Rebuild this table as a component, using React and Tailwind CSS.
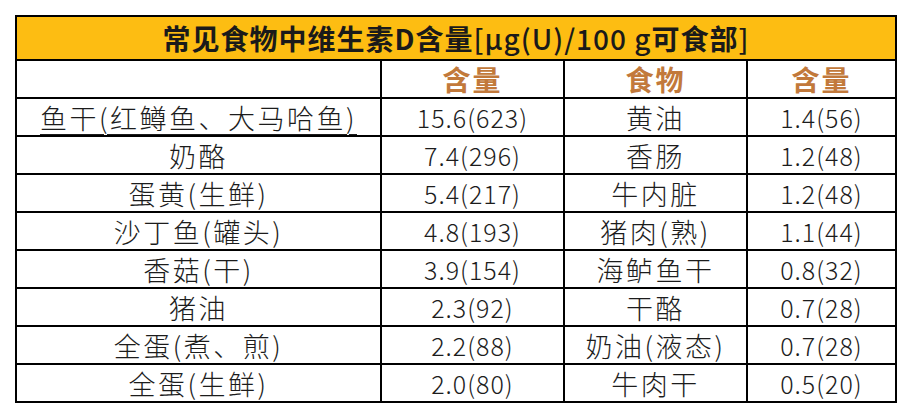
const rows = [
  ["鱼干(红鳟鱼、大马哈鱼)", "15.6(623)", "黄油", "1.4(56)"],
  ["奶酪", "7.4(296)", "香肠", "1.2(48)"],
  ["蛋黄(生鲜)", "5.4(217)", "牛内脏", "1.2(48)"],
  ["沙丁鱼(罐头)", "4.8(193)", "猪肉(熟)", "1.1(44)"],
  ["香菇(干)", "3.9(154)", "海鲈鱼干", "0.8(32)"],
  ["猪油", "2.3(92)", "干酪", "0.7(28)"],
  ["全蛋(煮、煎)", "2.2(88)", "奶油(液态)", "0.7(28)"],
  ["全蛋(生鲜)", "2.0(80)", "牛肉干", "0.5(20)"],
];

const cjk = "text-[27px] tracking-[2.5px] font-light text-[#1c1c1c]";
const num = "text-[25px] tracking-[1px] font-light text-[#1c1c1c]";
const head = "text-[28px] tracking-[2px] font-bold text-[#c2793b]";

export default function App() {
  return (
    <div
      className="w-[912px] h-[412px] bg-white pt-[15px] pl-[15px]"
      style={{ fontFamily: '"Noto Sans CJK SC", "Noto Sans", sans-serif' }}
    >
      <div className="w-[882px] border-2 border-black">
        {/* 标题 */}
        <div className="h-[42px] bg-[#fdbd12] flex items-center justify-center text-[28px] font-bold tracking-[1px] text-[#1a1a1a] leading-none">
          常见食物中维生素D含量<span className="font-medium">[μg(U)/100 g</span>可食部<span className="font-medium">]</span>
        </div>

        {/* 表头 */}
        <div className="flex h-[38px] border-t-2 border-black leading-none">
          <div className="w-[363px]"></div>
          <div className={`w-[183px] border-l-2 border-black flex items-center justify-center ${head}`}>含量</div>
          <div className={`w-[183px] border-l-2 border-black flex items-center justify-center ${head}`}>食物</div>
          <div className={`flex-1 border-l-2 border-black flex items-center justify-center ${head}`}>含量</div>
        </div>

        {rows.map((r, i) => (
          <div key={i} className="flex h-[38px] border-t-2 border-black leading-none">
            <div className={`w-[363px] flex items-center justify-center ${cjk}`}>
              <span className={i === 0 ? "underline underline-offset-[5px] decoration-1" : ""}>{r[0]}</span>
            </div>
            <div className={`w-[183px] border-l-2 border-black flex items-center justify-center ${num}`}>{r[1]}</div>
            <div className={`w-[183px] border-l-2 border-black flex items-center justify-center ${cjk}`}>{r[2]}</div>
            <div className={`flex-1 border-l-2 border-black flex items-center justify-center ${num}`}>{r[3]}</div>
          </div>
        ))}
      </div>
    </div>
  );
}
